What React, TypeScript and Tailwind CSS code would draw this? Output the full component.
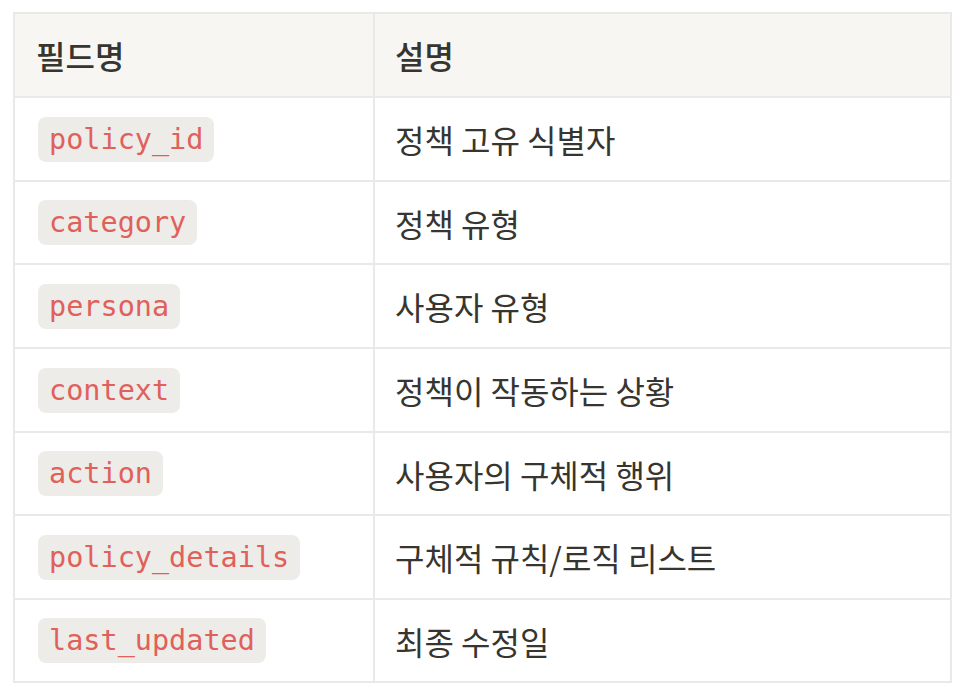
const rows: { field: string; desc: string; h: string }[] = [
  { field: "policy_id", desc: "정책 고유 식별자", h: "h-[84px]" },
  { field: "category", desc: "정책 유형", h: "h-[83px]" },
  { field: "persona", desc: "사용자 유형", h: "h-[84px]" },
  { field: "context", desc: "정책이 작동하는 상황", h: "h-[84px]" },
  { field: "action", desc: "사용자의 구체적 행위", h: "h-[83px]" },
  { field: "policy_details", desc: "구체적 규칙/로직 리스트", h: "h-[84px]" },
  { field: "last_updated", desc: "최종 수정일", h: "h-[83px]" },
];

export default function App() {
  return (
    <div className="min-h-screen bg-white pl-[13px] pt-[12px] font-['Noto_Sans_CJK_KR','Noto_Sans',sans-serif] text-[#37352f]">
      <table className="w-[939px] border-collapse">
        <thead>
          <tr className="h-[84px] bg-[#f7f6f3]">
            <th className="w-[360px] border-2 border-[#e9e9e7] pl-[21px] text-left align-middle text-[32px] font-medium">
              필드명
            </th>
            <th className="border-2 border-[#e9e9e7] pl-[20px] text-left align-middle text-[32px] font-medium">
              설명
            </th>
          </tr>
        </thead>
        <tbody>
          {rows.map((r) => (
            <tr key={r.field} className={r.h}>
              <td className="border-2 border-[#e9e9e7] pl-[23px] align-middle">
                <span className="inline-block rounded-[8px] bg-[#edece9] px-[11px] py-[2px] font-['DejaVu_Sans_Mono',monospace] text-[28.5px] leading-[41px] text-[#e0605a]">
                  {r.field}
                </span>
              </td>
              <td className="border-2 border-[#e9e9e7] pl-[20px] align-middle text-[32px]">
                {r.desc}
              </td>
            </tr>
          ))}
        </tbody>
      </table>
    </div>
  );
}
